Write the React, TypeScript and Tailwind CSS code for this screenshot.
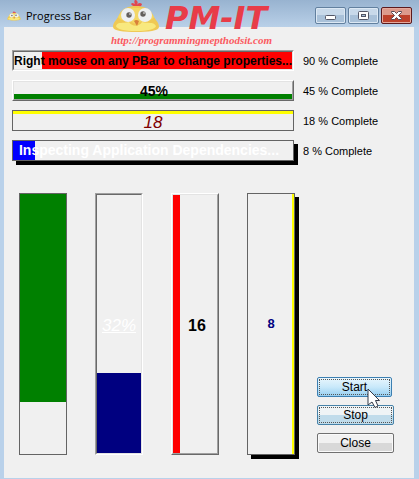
import type { ReactNode } from "react";

type Frame = { outer: string; inner: string };

const raised: Frame = {
  outer: "border border-t-white border-l-white border-r-[#696969] border-b-[#696969]",
  inner: "border border-t-[#e3e3e3] border-l-[#e3e3e3] border-r-[#a0a0a0] border-b-[#a0a0a0]",
};
const sunken: Frame = {
  outer: "border border-t-[#a0a0a0] border-l-[#a0a0a0] border-r-white border-b-white",
  inner: "border border-t-[#696969] border-l-[#696969] border-r-[#e3e3e3] border-b-[#e3e3e3]",
};
const flat: Frame = { outer: "border border-[#646464]", inner: "" };
const lifted: Frame = {
  outer: "border border-[#646464] shadow-[4px_4px_0_#000]",
  inner: "",
};

type BarProps = {
  value: number;
  label: string;
  frame: Frame;
  fill: string;
  size: string;
  children?: ReactNode;
};

function Bar({ value, label, frame, fill, size, children }: BarProps) {
  return (
    <div
      role="progressbar"
      aria-label={label}
      aria-valuenow={value}
      aria-valuemin={0}
      aria-valuemax={100}
      className={`bg-[#f0f0f0] ${size} ${frame.outer}`}
    >
      <div className={`relative h-full ${frame.inner}`}>
        <div className={`absolute ${fill}`} />
        <div className="absolute inset-0 flex items-center justify-center whitespace-nowrap">
          {children}
        </div>
      </div>
    </div>
  );
}

function Row({ status, children }: { status: string; children: ReactNode }) {
  return (
    <div className="flex items-center">
      {children}
      <span className="w-[120px] pl-[9px] text-[11px] leading-4">{status}</span>
    </div>
  );
}

function Chick({ className }: { className: string }) {
  return (
    <svg viewBox="0 0 48 33" className={className} aria-hidden="true">
      <path d="M24 7C20 6 18 4 20 3c2 0 3 1 3 2-1-4-1-5 1-5 2 1 2 3 1 5 1-2 3-3 5-1 0 2-2 3-6 3z" fill="#e2474f" />
      <path d="M1 27C1 22 5 20 7 15 10 8 17 6 24 6s14 2 17 9c2 5 6 7 6 12 0 4-11 5-23 5S1 31 1 27z" fill="#efc955" />
      <path d="M6 17C10 9 17 8 24 8s14 1 18 9c-3 5-10 3-14 5-2 2-6 2-8 0-4-2-11 0-14-5z" fill="#f3d765" />
      <path d="M4 26c2-5 7-2 13-4 3 5 10 5 13 0 6 2 11-1 14 4 0 3-9 5-20 5S4 29 4 26z" fill="#f8e97f" />
      <circle cx="16" cy="15" r="7" fill="#edf0f2" />
      <circle cx="33" cy="15" r="7" fill="#edf0f2" />
      <circle cx="17" cy="15" r="2.700" fill="#64605d" />
      <circle cx="31" cy="14" r="2.700" fill="#64605d" />
      <circle cx="18" cy="14" r="0.800" fill="#fff" />
      <circle cx="32" cy="13" r="0.800" fill="#fff" />
      <path d="M22 21q2-2 5 0l-2 5z" fill="#d9803a" />
    </svg>
  );
}

const caption =
  "flex h-[17px] w-[31px] items-center justify-center rounded-[2px] border border-[#62809f] bg-linear-to-b from-[#c8d9ea] from-50% to-[#a9c1d9] to-50% shadow-[inset_0_0_0_1px_#dce8f4]";

const button =
  "flex h-5 items-center justify-center rounded-[2px] border text-[12px] leading-4";

export default function App() {
  return (
    <div className="relative flex min-h-screen flex-col bg-[#b9d1ea] font-['Liberation_Sans',Arial,sans-serif] text-black">
      <header className="flex h-[27px] items-center justify-between bg-linear-to-b from-[#98b3d0] to-[#b9d0e8] pr-[7px] pl-[7px]">
        <div className="flex items-center gap-[5px] pt-1">
          <Chick className="h-3 w-[14px]" />
          <h1 className="font-['Open_Sans','Noto_Sans',sans-serif] text-[11px] leading-4">
            Progress Bar
          </h1>
        </div>
        <div className="flex gap-[2px] pt-1">
          <button aria-label="Minimize" className={caption}>
            <svg width="13" height="11" viewBox="0 0 13 11">
              <rect x="1.5" y="5.5" width="10" height="4" rx="1" fill="#fff" stroke="#535666" />
            </svg>
          </button>
          <button aria-label="Maximize" className={caption}>
            <svg width="13" height="11" viewBox="0 0 13 11">
              <rect x="1.5" y="1.5" width="10" height="8" rx="1" fill="#fff" stroke="#535666" />
              <rect x="4.5" y="4.5" width="4" height="2" fill="#a9c1d9" stroke="#535666" />
            </svg>
          </button>
          <button
            aria-label="Close window"
            className="flex h-[17px] w-[31px] items-center justify-center rounded-[2px] border border-[#5c1a1d] bg-linear-to-b from-[#dc9a8c] from-50% to-[#bd412b] to-50% shadow-[inset_0_0_0_1px_#e5a99d]"
          >
            <svg width="13" height="11" viewBox="0 0 13 11">
              <path
                d="M1.5 1.5h3l2 2 2-2h3v1l-3 3 3 3v1h-3l-2-2-2 2h-3v-1l3-3-3-3z"
                fill="#fff"
                stroke="#5a4a55"
              />
            </svg>
          </button>
        </div>
      </header>

      <div className="pointer-events-none absolute top-0 left-[111px]">
        <div className="flex h-[34px] items-start pl-px">
          <Chick className="h-[33px] w-12" />
          <span className="pt-[2px] pl-[5px] font-['DejaVu_Sans',sans-serif] text-[32px] leading-8 font-bold text-[#e83c48] italic">
            PM-IT
          </span>
        </div>
        <p className="font-['Liberation_Serif',serif] text-[11px] leading-3 font-bold text-[#fb5a60] italic">
          http://programmingmepthodsit.com
        </p>
      </div>

      <main className="mr-[5px] mb-px ml-1 flex-1 bg-[#f0f0f0] pt-[23px] pl-2">
        <div className="flex flex-col gap-[9px]">
          <Row status="90 % Complete">
            <Bar value={90} label="Properties" frame={sunken} size="h-[21px] flex-1" fill="inset-y-0 right-0 w-[90%] bg-[#ff0000]">
              <span className="text-[12px] font-bold">
                Right mouse on any PBar to change properties...
              </span>
            </Bar>
          </Row>
          <Row status="45 % Complete">
            <Bar value={45} label="Percent" frame={raised} size="h-[21px] flex-1" fill="inset-x-0 bottom-0 h-[5px] bg-[#008000]">
              <span className="pt-px pl-[2px] text-[14px] font-bold">45%</span>
            </Bar>
          </Row>
          <Row status="18 % Complete">
            <Bar value={18} label="Position" frame={flat} size="h-[21px] flex-1" fill="inset-x-0 top-0 h-[3px] bg-[#ffff00]">
              <span className="pt-1 text-[17px] text-[#800000] italic">18</span>
            </Bar>
          </Row>
          <Row status="8 % Complete">
            <Bar value={8} label="Dependencies" frame={lifted} size="h-[21px] flex-1" fill="inset-y-0 left-0 w-[8%] bg-[#0000ff]">
              <span className="pr-2 text-[14px] font-bold text-white">
                Inspecting Application Dependencies...
              </span>
            </Bar>
          </Row>
        </div>

        <div className="mt-8 flex pl-[7px]">
          <div className="flex flex-1 gap-7">
            <Bar value={80} label="Green level" frame={flat} size="h-[262px] w-12" fill="inset-x-0 top-0 h-[80%] bg-[#008000]" />
            <Bar value={32} label="Navy level" frame={sunken} size="h-[262px] w-12" fill="inset-x-0 bottom-0 h-[31%] bg-[#000080]">
              <span className="pt-1 text-[17px] text-white italic underline">32%</span>
            </Bar>
            <Bar value={16} label="Red level" frame={raised} size="h-[262px] w-12" fill="inset-y-0 left-0 w-[7px] bg-[#ff0000]">
              <span className="pt-1 pl-1 text-[16px] font-bold">16</span>
            </Bar>
            <Bar value={8} label="Yellow level" frame={lifted} size="h-[262px] w-12" fill="inset-y-0 right-0 w-[2px] bg-[#ffff00]">
              <span className="text-[13px] font-bold text-[#000080]">8</span>
            </Bar>
          </div>
          <div className="flex w-[119px] flex-col justify-end gap-2 pb-[2px] pl-[22px]">
            <button className={`${button} relative w-[75px] border-[#3c7fb1] bg-linear-to-b from-[#e8f6fd] via-[#c9e9fa] via-50% to-[#96cef0]`}>
              <span className="absolute inset-px border border-dotted border-[#555]" />
              Start
              <svg
                className="absolute top-[10px] left-[48px] z-10"
                width="15"
                height="21"
                viewBox="0 0 15 21"
                aria-hidden="true"
              >
                <path d="M2 1v16l4-3 3 5.500 3-1.500-2.500-5.500h4z" fill="#fff" stroke="#343a48" />
              </svg>
            </button>
            <button className={`${button} relative w-[77px] border-[#4682a8] bg-linear-to-b from-[#eff4f6] from-50% to-[#c0dceb] to-50%`}>
              <span className="absolute inset-px border border-dotted border-[#555]" />
              Stop
            </button>
            <button className={`${button} w-[77px] border-[#707070] bg-linear-to-b from-[#f1f1f1] from-50% to-[#d8d8d8] to-50% shadow-[inset_0_0_0_1px_#fafafa]`}>
              Close
            </button>
          </div>
        </div>
      </main>
    </div>
  );
}
